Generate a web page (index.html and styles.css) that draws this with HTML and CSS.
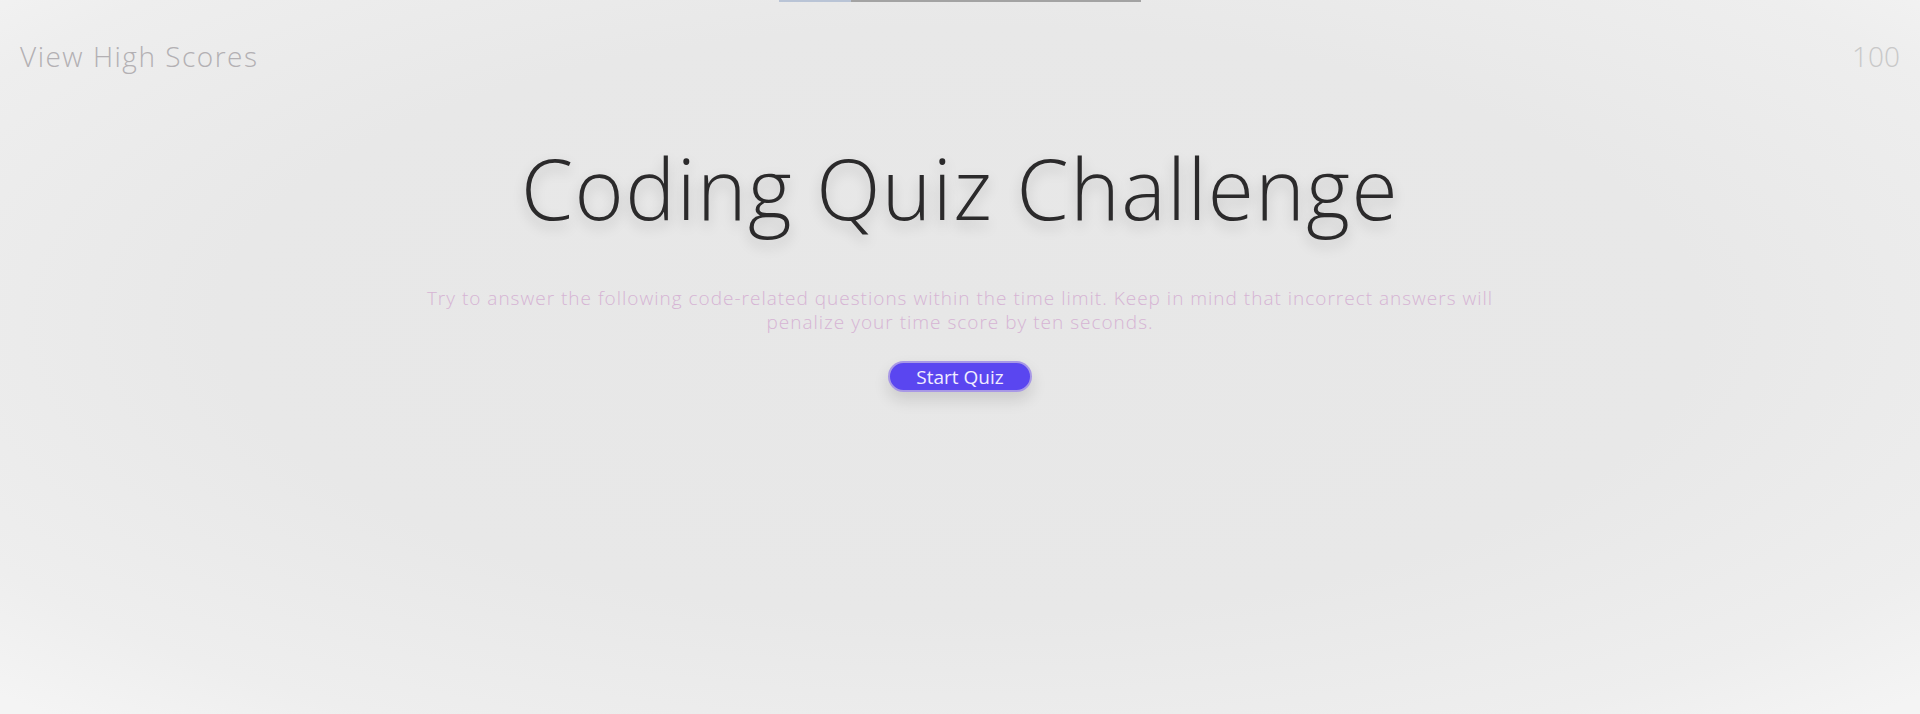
FILE: index.html
```html
<!DOCTYPE html>
<html lang="en">
<head>
<meta charset="utf-8">
<title>Coding Quiz Challenge</title>
<link rel="stylesheet" href="styles.css">
</head>
<body>
<div class="progress"><div class="progress-fill"></div></div>
<header class="topbar">
  <a class="highscores">View High Scores</a>
  <span class="timer">100</span>
</header>
<main class="intro">
  <h1 class="title">Coding Quiz Challenge</h1>
  <p class="desc">Try to answer the following code-related questions within the time limit. Keep in mind that incorrect answers will penalize your time score by ten seconds.</p>
  <button class="start">Start Quiz</button>
</main>
</body>
</html>
```
FILE: styles.css
```css
html, body {
  margin: 0;
  height: 100%;
}
body {
  font-family: "Open Sans", "Liberation Sans", sans-serif;
  font-weight: 300;
  background: radial-gradient(ellipse 70% 75% at 50% 45%, #e7e7e7 0%, #e8e8e8 55%, #eeeeee 85%, #f4f4f4 100%);
  overflow: hidden;
}
.progress {
  width: 362px;
  height: 2px;
  margin: 0 auto;
  background: #a3a3a3;
}
.progress-fill {
  width: 72px;
  height: 100%;
  background: #b9c4d6;
}
.topbar {
  display: flex;
  justify-content: space-between;
  align-items: center;
  padding: 36px 20px 0;
}
.highscores {
  font-size: 28px;
  letter-spacing: 1.5px;
  color: #b3b0b3;
  line-height: 36px;
}
.timer {
  font-size: 28px;
  color: #c8c8c8;
  line-height: 36px;
}
.intro {
  display: flex;
  flex-direction: column;
  align-items: center;
}
.title {
  margin: 64px 0 0;
  font-size: 84px;
  font-weight: 300;
  letter-spacing: 1.4px;
  line-height: 100px;
  color: #2b2a2b;
  text-shadow: 0 6px 14px rgba(0,0,0,0.18);
}
.desc {
  margin: 48px 0 0;
  width: 1090px;
  text-align: center;
  font-size: 19px;
  letter-spacing: 1px;
  line-height: 24px;
  color: #d6b4d4;
}
.start {
  margin-top: 27px;
  width: 144px;
  height: 31px;
  border-radius: 16px;
  border: 2px solid #a898e6;
  background: #5a46f0;
  color: #f0ecff;
  font-family: inherit;
  font-weight: 400;
  font-size: 19px;
  padding: 0;
  box-shadow: 0 8px 16px rgba(0,0,0,0.12);
}
```
